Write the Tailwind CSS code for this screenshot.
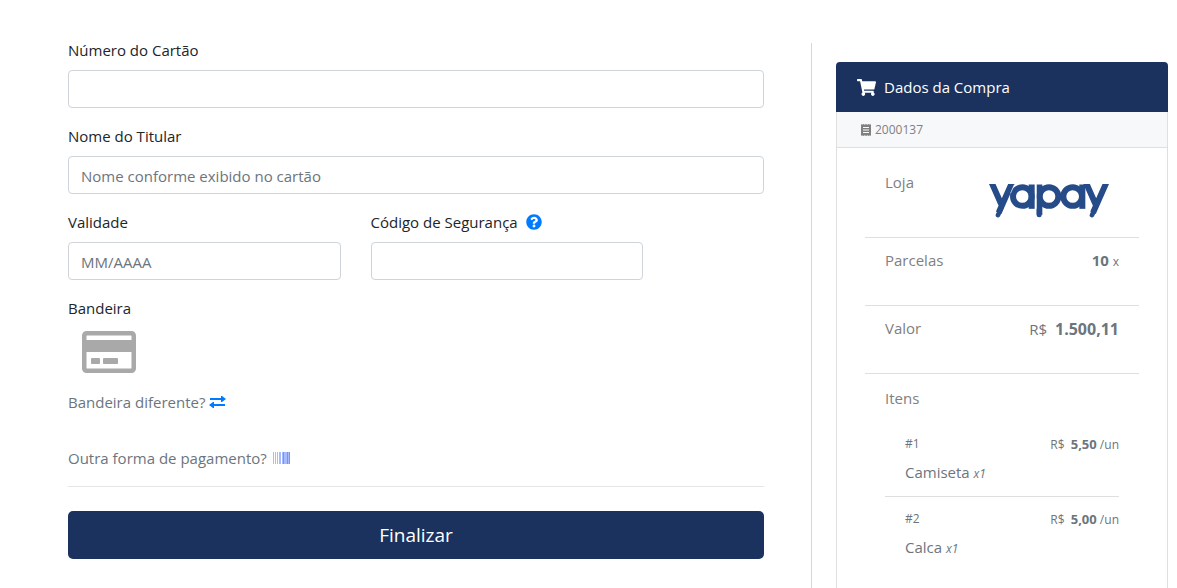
<!DOCTYPE html>
<html lang="pt-BR">
<head>
<meta charset="utf-8">
<meta name="viewport" content="width=device-width, initial-scale=1">
<title>Pagamento</title>
<script src="https://cdn.jsdelivr.net/npm/@tailwindcss/browser@4"></script>
</head>
<body class="bg-white font-['Segoe_UI','Open_Sans',sans-serif] text-[15px] leading-6 text-[#212529]">
<main class="grid grid-cols-[743fr_357fr] pt-[38px] pr-[9px] pl-[68px]">
  <form class="pr-[47px]">
    <div class="mb-4">
      <label for="numero" class="mb-2 block">Número do Cartão</label>
      <input id="numero" type="text" class="block h-[38px] w-full rounded border border-[#ced4da] px-3">
    </div>
    <div class="mb-4">
      <label for="titular" class="mb-2 block">Nome do Titular</label>
      <input id="titular" type="text" placeholder="Nome conforme exibido no cartão" class="block h-[38px] w-full rounded border border-[#ced4da] px-3 pt-0.5 placeholder:text-[#6c757d]">
    </div>
    <div class="mb-4 grid grid-cols-12 gap-x-[30px]">
      <div class="col-span-5">
        <label for="validade" class="mb-2 block">Validade</label>
        <input id="validade" type="text" placeholder="MM/AAAA" class="block h-[38px] w-full rounded border border-[#ced4da] px-3 pt-0.5 placeholder:text-[#6c757d]">
      </div>
      <div class="col-span-5">
        <div class="mb-2 flex items-center gap-2 whitespace-nowrap">
          <label for="codigo">Código de Segurança</label>
          <button type="button" aria-label="Ajuda"><svg class="size-4 fill-[#007bff]" viewBox="0 0 512 512"><path d="M504 256c0 136.997-111.043 248-248 248S8 392.997 8 256C8 119.083 119.043 8 256 8s248 111.083 248 248zM262.655 90c-54.497 0-89.255 22.957-116.549 63.758-3.536 5.286-2.353 12.415 2.715 16.258l34.699 26.31c5.205 3.947 12.621 3.008 16.665-2.122 17.864-22.658 30.113-35.797 57.303-35.797 20.429 0 45.698 13.148 45.698 32.958 0 14.976-12.363 22.667-32.534 33.976C247.128 238.528 216 254.941 216 296v4c0 6.627 5.373 12 12 12h56c6.627 0 12-5.373 12-12v-1.333c0-28.462 83.186-29.647 83.186-106.667 0-58.002-60.165-102-116.531-102zM256 338c-25.365 0-46 20.635-46 46 0 25.364 20.635 46 46 46s46-20.636 46-46c0-25.365-20.635-46-46-46z"/></svg></button>
        </div>
        <input id="codigo" type="text" class="block h-[38px] w-full rounded border border-[#ced4da] px-3">
      </div>
    </div>
    <p>Bandeira</p>
    <svg class="mt-2 ml-[14px] h-12 w-[54px] fill-[#a9a9a9]" viewBox="0 0 576 512" aria-hidden="true"><path d="M527.9 32H48.1C21.5 32 0 53.5 0 80v352c0 26.5 21.5 48 48.1 48h479.8c26.6 0 48.1-21.5 48.1-48V80c0-26.5-21.5-48-48.1-48zM54.1 80h467.8c3.3 0 6 2.7 6 6v42H48.1V86c0-3.3 2.7-6 6-6zm467.8 352H54.1c-3.3 0-6-2.7-6-6V256h479.8v170c0 3.3-2.7 6-6 6zM192 332v40c0 6.6-5.4 12-12 12h-72c-6.6 0-12-5.4-12-12v-40c0-6.600 5.400-12 12-12h72c6.600 0 12 5.400 12 12zm192 0v40c0 6.600-5.400 12-12 12H236c-6.600 0-12-5.400-12-12v-40c0-6.600 5.400-12 12-12h136c6.600 0 12 5.400 12 12z"/></svg>
    <a href="#bandeira" class="mt-[14px] flex items-center gap-1 text-[#6c757d]">Bandeira diferente?
      <svg class="h-3 w-[17px] fill-[#007bff]" viewBox="0 0 17 12" aria-hidden="true"><path d="M1 2h11V0h1l4 3-4 3h-1V4H1zM16 8H5V6H4L0 9l4 3h1v-2h11z"/></svg>
    </a>
    <a href="#pagamento" class="mt-8 flex items-center gap-1.5 text-[#6c757d]">Outra forma de pagamento?
      <svg class="h-3 w-[17px] fill-[#4d79ff]" viewBox="0 0 17 12" aria-hidden="true"><path opacity=".5" d="M0 0h1v12H0zM2 0h1v12H2zM4 0h1v12H4zM6 0h2v12H6zM9 0h1v12H9zM11 0h2v12h-2zM13 0h1v12h-1zM15 0h1v12h-1z"/><path opacity=".8" d="M10 0h1v12h-1zM14 0h1v12h-1zM16 0h1v12h-1z"/></svg>
    </a>
    <hr class="mt-4 mb-6 border-[#e5e5e5]">
    <button type="submit" class="h-12 w-full rounded-[5px] bg-[#1b325f] text-[19px] text-white">Finalizar</button>
  </form>

  <aside class="mt-[5px] border-l border-[#d3d7de] pt-[19px] pl-6">
    <div class="rounded border border-[#dfdfdf]">
      <h2 class="-mx-px -mt-px flex h-[50px] items-center gap-2 rounded-t bg-[#1b325f] pl-[21px] text-white">
        <svg class="h-[17px] w-[19px] fill-white" viewBox="0 0 576 512" aria-hidden="true"><path d="M528.12 301.319l47.273-208C578.806 78.301 567.391 64 551.99 64H159.208l-9.166-44.81C147.758 8.021 137.93 0 126.529 0H24C10.745 0 0 10.745 0 24v16c0 13.255 10.745 24 24 24h69.883l70.248 343.435C147.325 417.1 136 435.222 136 456c0 30.928 25.072 56 56 56s56-25.072 56-56c0-15.674-6.447-29.835-16.824-40h209.647C430.447 426.165 424 440.326 424 456c0 30.928 25.072 56 56 56s56-25.072 56-56c0-22.172-12.888-41.332-31.579-50.405l5.517-24.276c3.413-15.018-8.002-29.319-23.403-29.319H218.117l-6.545-32h293.145c11.206 0 20.920-7.754 23.403-18.681z"/></svg>
        Dados da Compra
      </h2>
      <p class="flex h-9 items-center gap-1 border-b border-[#dfdfdf] bg-[#f7f8fa] pl-6 text-xs text-[#808080]">
        <svg class="h-3 w-[10px]" viewBox="0 0 10 12" aria-hidden="true"><path fill="#808080" d="M0 0l1 .8L2.200 0l1.400.8L5 0l1.400.8L7.800 0 9 .8 10 0v12l-1-.8-1.200.8-1.400-.8L5 12l-1.400-.8-1.400.8L1 11.200 0 12z"/><path fill="#f7f8fa" d="M2 3h6v1H2zM2 5.500h6v1H2zM2 8h6v1H2z"/></svg>
        2000137
      </p>
      <div class="px-7 text-[#808080]">
        <div class="flex h-[90px] justify-between border-b border-[#dfdfdf] px-5 pt-[22px]">
          <span>Loja</span>
          <svg class="mt-[14px] mr-[10px] h-[34px] w-[120px]" viewBox="88 74 360 101" role="img" aria-label="yapay" fill="none" stroke="#254b88" stroke-width="18">
            <path d="M94 65L126 137M159 65L117 160"/><path stroke-linecap="round" stroke-width="14" d="M124 147L115 167"/>
            <circle cx="188" cy="111" r="28"/><path d="M216 75V148"/>
            <path stroke-width="17" d="M239.500 75V166"/><path stroke-linecap="round" stroke-width="15" d="M238.500 150V166"/>
            <circle cx="268" cy="111" r="28"/><circle cx="339" cy="111" r="28"/><path d="M368 75V148"/>
            <path d="M377 65L409 137M442 65L400 160"/><path stroke-linecap="round" stroke-width="14" d="M406 147L397 167"/>
            <path stroke="#fff" stroke-width="2" d="M164 75L153 101M228.500 75V150"/>
          </svg>
        </div>
        <div class="flex h-[68px] justify-between border-b border-[#dfdfdf] px-5 pt-[10px]">
          <span>Parcelas</span>
          <span class="text-[#6c757d]"><b>10</b> <small class="text-xs">x</small></span>
        </div>
        <div class="flex h-[68px] justify-between border-b border-[#dfdfdf] px-5 pt-[10px]">
          <span>Valor</span>
          <span class="flex items-center gap-2 self-start pt-px text-[#6c757d]">R$ <b class="text-base leading-6">1.500,11</b></span>
        </div>
        <div class="px-5 pt-3 pb-8">
          <h3>Itens</h3>
          <ul class="mt-3 text-[#6c757d]">
            <li class="border-b border-[#dfdfdf] pt-[10px] pb-3 pl-5">
              <p class="flex h-6 justify-between text-xs leading-6"><span>#1</span><span>R$ &nbsp;<b class="text-[13px]">5,50</b> /un</span></p>
              <p class="mt-1">Camiseta <i class="text-xs">x1</i></p>
            </li>
            <li class="pt-[10px] pb-3 pl-5">
              <p class="flex h-6 justify-between text-xs leading-6"><span>#2</span><span>R$ &nbsp;<b class="text-[13px]">5,00</b> /un</span></p>
              <p class="mt-1">Calca <i class="text-xs">x1</i></p>
            </li>
          </ul>
        </div>
      </div>
    </div>
  </aside>
</main>
</body>
</html>
